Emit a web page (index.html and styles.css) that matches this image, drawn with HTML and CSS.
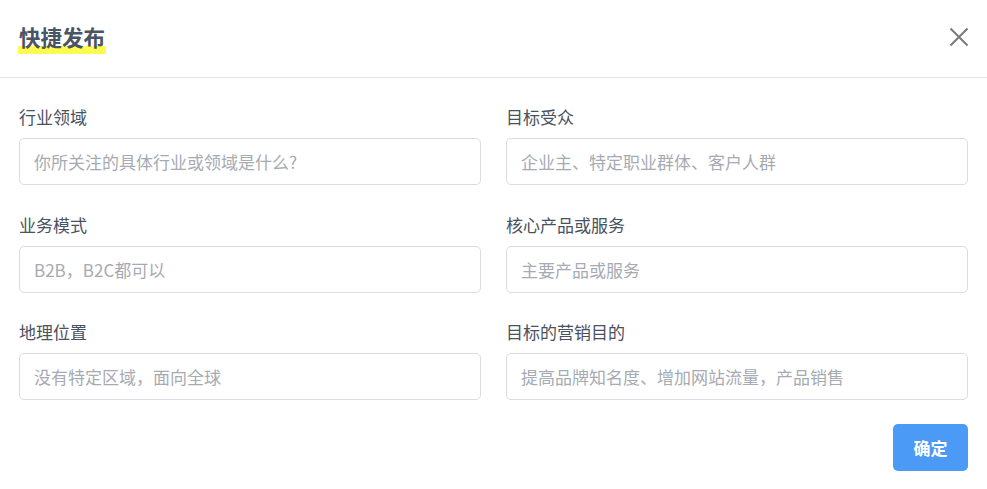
FILE: index.html
```html
<!DOCTYPE html>
<html lang="zh">
<head>
<meta charset="utf-8">
<link rel="stylesheet" href="styles.css">
</head>
<body>
<div class="dialog">
  <div class="header">
    <h2 class="title"><span class="mark">快捷发布</span></h2>
    <button class="close" aria-label="关闭">
      <svg width="20" height="20" viewBox="0 0 20 20"><path d="M1.5 1.5L18.5 18.5M18.5 1.5L1.5 18.5" stroke="#7a7a7a" stroke-width="2" fill="none"/></svg>
    </button>
  </div>
  <div class="body">
    <div class="grid">
      <div class="field"><label class="label">行业领域</label><input class="input" placeholder="你所关注的具体行业或领域是什么?"></div>
      <div class="field"><label class="label">目标受众</label><input class="input" placeholder="企业主、特定职业群体、客户人群"></div>
      <div class="field"><label class="label">业务模式</label><input class="input" placeholder="B2B，B2C都可以"></div>
      <div class="field"><label class="label">核心产品或服务</label><input class="input" placeholder="主要产品或服务"></div>
      <div class="field"><label class="label">地理位置</label><input class="input" placeholder="没有特定区域，面向全球"></div>
      <div class="field"><label class="label">目标的营销目的</label><input class="input" placeholder="提高品牌知名度、增加网站流量，产品销售"></div>
    </div>
    <div class="footer"><button class="btn">确定</button></div>
  </div>
</div>
</body>
</html>
```
FILE: styles.css
```css
* { box-sizing: border-box; }
html, body { margin: 0; padding: 0; background: #fff; }
body { font-family: "Noto Sans CJK SC", "Noto Sans", sans-serif; color: #4a5260; }
.dialog { width: 987px; }
.header {
  height: 78px;
  border-bottom: 1px solid #e3e3e3;
  display: flex;
  align-items: center;
  justify-content: space-between;
  padding: 0 18px 4px 19px;
}
.title { margin: 0; font-size: 21.5px; font-weight: 700; color: #4a5464; line-height: 28px; }
.mark { position: relative; display: inline-block; z-index: 0; }
.mark::after {
  content: "";
  position: absolute;
  left: -1px;
  right: -1px;
  bottom: -3px;
  height: 8px;
  background: #fdfb4f;
  z-index: -1;
}
.close { border: 0; background: none; padding: 0; width: 20px; height: 20px; display: flex; cursor: pointer; }
.body { padding: 27px 19px 19px 19px; }
.grid { display: grid; grid-template-columns: 462px 462px; column-gap: 25px; row-gap: 27.5px; }
.field { display: flex; flex-direction: column; }
.label { font-size: 17px; line-height: 23px; margin-bottom: 10px; color: #4a5260; }
.input {
  height: 47px;
  border: 1px solid #d9dce1;
  border-radius: 5px;
  padding: 0 14px;
  font-family: inherit;
  font-size: 17px;
  color: #333;
  outline: none;
}
.input::placeholder { color: #a6abb3; }
.footer { display: flex; justify-content: flex-end; margin-top: 24px; }
.btn {
  width: 75px;
  height: 47px;
  background: #4b9af5;
  color: #fff;
  border: 0;
  border-radius: 5px;
  font-family: inherit;
  font-size: 17px;
  font-weight: 700;
}
```
